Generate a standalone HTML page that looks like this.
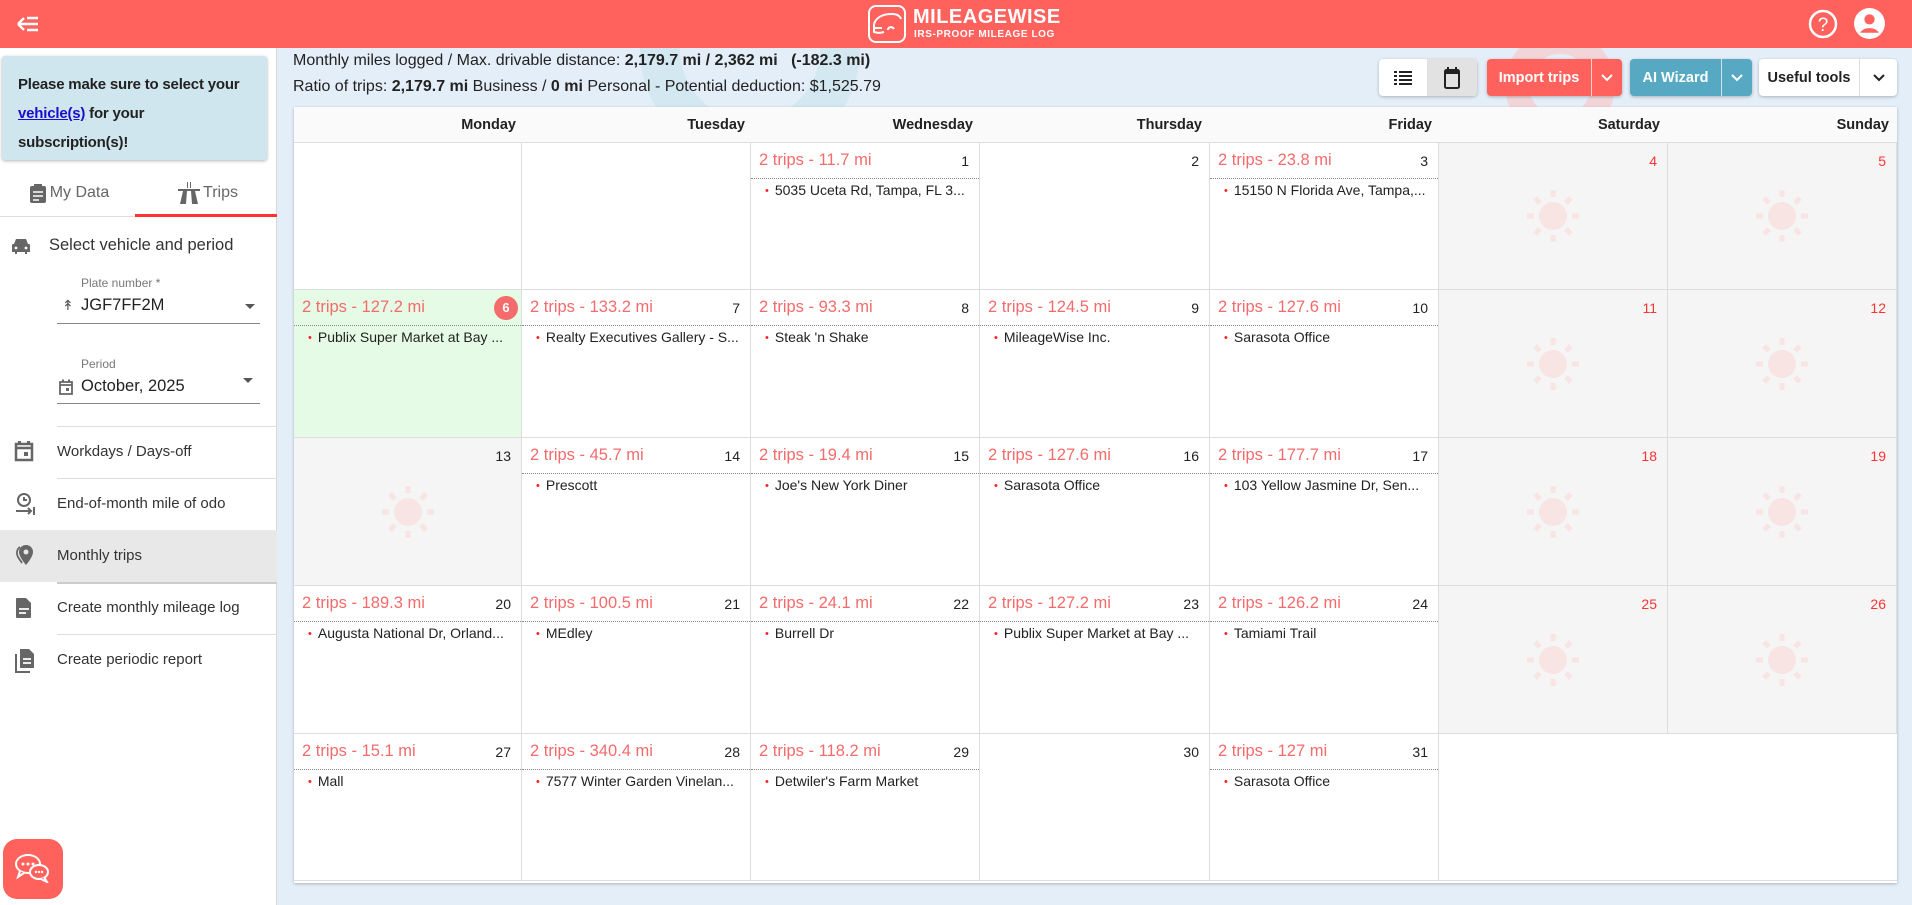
<!DOCTYPE html>
<html><head><meta charset="utf-8"><style>
*{box-sizing:border-box;margin:0;padding:0}
body{width:1912px;height:905px;overflow:hidden;font-family:"Liberation Sans",Arial,sans-serif;background:#e4eef8;position:relative;color:#222}
.hdr{position:absolute;left:0;top:0;width:1912px;height:48px;background:#ff625d;z-index:5}
.side{position:absolute;left:0;top:48px;width:277px;height:857px;background:#fff;border-right:1px solid #d8d8d8;z-index:4}
.note{position:absolute;left:2px;top:8px;width:265px;height:104px;background:#cfe6ee;border-radius:3px;box-shadow:0 1px 3px rgba(0,0,0,.3);padding:14px 12px 14px 16px;font-size:15px;font-weight:bold;line-height:29px;color:#222;letter-spacing:-0.2px}
.note a{color:#1a0dcc;text-decoration:underline}
.tab{position:absolute;top:122px;height:46px;width:138px;font-size:16px;color:#666;display:flex;align-items:center;justify-content:center;gap:3px}
.mi{position:absolute;left:0;width:277px;height:52px;font-size:15px;color:#333}
.mi span{position:absolute;left:57px;top:17px}
.mi svg{position:absolute;left:14px;top:14px}
.sep{position:absolute;left:57px;width:220px;height:1px;background:#ddd}
.stat{position:absolute;left:293px;font-size:16px;color:#222;z-index:2}
.cal{position:absolute;left:294px;top:107px;width:1603px;height:776px;background:#fff;box-shadow:0 1px 3px rgba(0,0,0,.25);z-index:2}
.dh{position:absolute;top:0;height:36px;background:#fafafa;border-bottom:1px solid #ddd;font-size:14.5px;font-weight:bold;line-height:36px;color:#222}
.c{position:absolute;border-right:1px solid #ddd;border-bottom:1px solid #ddd;overflow:hidden}
.c .t{position:absolute;left:8px;top:8px;font-size:16.5px;color:#f46b6b}
.c .n{position:absolute;right:10px;top:10px;font-size:14px;color:#222}
.c .dl{position:absolute;left:0;right:0;top:35px;border-top:1px dotted #888}
.c .it{position:absolute;left:14px;top:39px;font-size:14px;color:#222;white-space:nowrap}
.c .it:before{content:"•";color:#f22;margin-right:6px;font-size:11px;vertical-align:1px}
.we{background:#f5f5f5}
.we .n{color:#f33}
.sun{position:absolute;left:50%;top:50%;margin:-27px 0 0 -27px}
.btn{position:absolute;top:59px;height:37px;border-radius:4px;font-size:14.5px;font-weight:bold;display:flex;align-items:center;box-shadow:0 1px 3px rgba(0,0,0,.25);z-index:2}
</style></head><body>
<div class="hdr">
<svg style="position:absolute;left:16px;top:15px" width="24" height="18" viewBox="0 0 24 18"><path d="M2 9h20M2 9l6-6M2 9l6 6M11 3h11M11 15h11" stroke="#fff" stroke-width="2.4" fill="none"/></svg>
<svg style="position:absolute;left:866px;top:4px" width="44" height="40" viewBox="0 0 44 40"><rect x="3" y="2" width="36" height="36" rx="7" fill="none" stroke="#fff" stroke-width="2"/><path d="M8 20c2-6 8-10 18-10 5 0 8 2 9 5M8 20v8c3 1 7 1 10 0M8 24h8M22 26c0-3 4-4 6-1" stroke="#fff" stroke-width="2" fill="none"/></svg>
<div style="position:absolute;left:913px;top:6px;color:#fff;font-weight:bold;font-size:20px;letter-spacing:.5px">MILEAGEWISE</div>
<div style="position:absolute;left:914px;top:29px;color:#fff;font-weight:bold;font-size:10px;letter-spacing:.6px">IRS-PROOF MILEAGE LOG</div>
<svg style="position:absolute;left:1807px;top:8px" width="32" height="32" viewBox="0 0 32 32"><circle cx="16" cy="16" r="13" fill="none" stroke="#fff" stroke-width="2.5"/><text x="16" y="23" text-anchor="middle" font-size="19" fill="#fff" font-family="Liberation Sans">?</text></svg>
<svg style="position:absolute;left:1853px;top:7px" width="33" height="33" viewBox="0 0 32 32"><circle cx="16" cy="16" r="15" fill="#fff"/><circle cx="16" cy="12" r="5" fill="#ff625d"/><path d="M7 25c3-6 15-6 18 0" fill="#ff625d"/></svg>
</div>

<div class="side">
<div class="note">Please make sure to select your <a>vehicle(s)</a> for your subscription(s)!</div>
<div class="tab" style="left:0"><svg width="18" height="21" viewBox="0 0 18 21"><rect x="1" y="3" width="16" height="17" rx="2" fill="#666"/><rect x="5" y="1" width="8" height="4" fill="#666"/><path d="M4 9h10M4 13h10M4 17h6" stroke="#fff" stroke-width="1.6"/></svg>My Data</div>
<div class="tab" style="left:139px;color:#666"><svg width="22" height="22" viewBox="0 0 22 22"><path d="M0 7h22v2H0zM5 9l-3 13h6l1-13zM17 9l3 13h-6l-1-13zM9 0h1v6H9zM12 0h1v6h-1z" fill="#666"/></svg>Trips</div>
<div style="position:absolute;left:0;top:168px;width:277px;height:1px;background:#ddd"></div>
<div style="position:absolute;left:135px;top:166px;width:142px;height:3px;background:#f33"></div>
<svg style="position:absolute;left:11px;top:190px" width="20" height="16" viewBox="0 0 20 16"><path d="M3 6l2-5h10l2 5h1a1 1 0 011 1v7h-3v2h-2v-2H6v2H4v-2H1V7a1 1 0 011-1z" fill="#666"/><circle cx="5" cy="10" r="1.4" fill="#fff"/><circle cx="15" cy="10" r="1.4" fill="#fff"/></svg>
<div style="position:absolute;left:49px;top:188px;font-size:16.5px;color:#333">Select vehicle and period</div>
<div style="position:absolute;left:81px;top:228px;font-size:12px;color:#777">Plate number *</div>
<div style="position:absolute;left:62px;top:249px;font-size:14px;color:#555">↟</div>
<div style="position:absolute;left:81px;top:248px;font-size:16.5px;color:#222">JGF7FF2M</div>
<div style="position:absolute;left:245px;top:256px;border:5px solid transparent;border-top-color:#555"></div>
<div style="position:absolute;left:57px;top:275px;width:203px;height:1px;background:#888"></div>
<div style="position:absolute;left:81px;top:309px;font-size:12px;color:#777">Period</div>
<svg style="position:absolute;left:59px;top:331px" width="14" height="16" viewBox="0 0 14 16"><path d="M1 3h12v12H1z M1 3v3h12" fill="none" stroke="#666" stroke-width="1.8"/><rect x="3" y="0.5" width="2" height="3" fill="#666"/><rect x="9" y="0.5" width="2" height="3" fill="#666"/><rect x="7" y="9" width="3" height="3" fill="#666"/></svg>
<div style="position:absolute;left:81px;top:329px;font-size:16.5px;color:#222">October, 2025</div>
<div style="position:absolute;left:243px;top:330px;border:5px solid transparent;border-top-color:#555"></div>
<div style="position:absolute;left:57px;top:355px;width:203px;height:1px;background:#888"></div>
<div class="sep" style="top:378px"></div>
<div class="mi" style="top:378px"><svg width="20" height="22" viewBox="0 0 20 22"><path d="M2 4h16v16H2z M2 4v4h16" fill="none" stroke="#666" stroke-width="2.5"/><rect x="4" y="1" width="3" height="4" fill="#666"/><rect x="13" y="1" width="3" height="4" fill="#666"/><rect x="10" y="12" width="4" height="4" fill="#666"/></svg><span>Workdays / Days-off</span></div>
<div class="sep" style="top:430px"></div>
<div class="mi" style="top:430px"><svg width="22" height="24" viewBox="0 0 22 24"><circle cx="10" cy="8" r="6" fill="none" stroke="#666" stroke-width="2"/><path d="M10 5v3h3M2 19h15M14 16l3 3-3 3M20 15v8" stroke="#666" stroke-width="2" fill="none"/></svg><span>End-of-month mile of odo</span></div>
<div class="mi" style="top:482px;background:#e8e8e8"><svg width="22" height="22" viewBox="0 0 22 22"><path d="M12 1a7 7 0 017 7c0 5-7 13-7 13S5 13 5 8a7 7 0 017-7z" fill="#666"/><circle cx="12" cy="8" r="2.5" fill="#e8e8e8"/><path d="M6 3C3 5 2 9 4 13l4 6" stroke="#666" stroke-width="1.8" fill="none"/></svg><span>Monthly trips</span></div>
<div style="position:absolute;left:57px;top:534px;width:220px;height:2px;background:#ccc"></div>
<div class="mi" style="top:534px"><svg width="20" height="24" viewBox="0 0 20 24"><path d="M3 2h9l5 5v14a1 1 0 01-1 1H3a1 1 0 01-1-1V3a1 1 0 011-1z" fill="#666"/><path d="M5 13h10M5 17h7" stroke="#fff" stroke-width="1.8"/></svg><span>Create monthly mileage log</span></div>
<div class="sep" style="top:586px"></div>
<div class="mi" style="top:586px"><svg width="22" height="26" viewBox="0 0 22 26"><path d="M6 1h9l5 5v14H6z" fill="#666"/><path d="M2 6v18h14" stroke="#666" stroke-width="2" fill="none"/><path d="M9 11h8M9 15h8" stroke="#fff" stroke-width="1.8"/></svg><span>Create periodic report</span></div>
<div style="position:absolute;left:3px;top:791px;width:60px;height:60px;border-radius:14px;background:#ff625d"><svg style="position:absolute;left:11px;top:14px" width="38" height="30" viewBox="0 0 38 30"><ellipse cx="14" cy="11" rx="12" ry="9" fill="none" stroke="#fff" stroke-width="2"/><path d="M6 18l-2 6 6-4" fill="#ff625d" stroke="#fff" stroke-width="2"/><ellipse cx="25" cy="19" rx="9" ry="7" fill="#ff625d" stroke="#fff" stroke-width="2"/><path d="M30 24l3 5-6-3" fill="#ff625d" stroke="#fff" stroke-width="2"/><circle cx="9" cy="11" r="1.5" fill="#fff"/><circle cx="14" cy="11" r="1.5" fill="#fff"/><circle cx="19" cy="11" r="1.5" fill="#fff"/><circle cx="22" cy="19" r="1.2" fill="#fff"/><circle cx="25" cy="19" r="1.2" fill="#fff"/><circle cx="28" cy="19" r="1.2" fill="#fff"/></svg></div>
</div>

<div style="position:absolute;left:640px;top:-60px;width:220px;height:220px;border-radius:50%;border:40px solid #d3e8f1;z-index:1"></div>
<div style="position:absolute;left:1505px;top:30px;width:110px;height:110px;border-radius:50%;border:24px solid #f2d5d9;z-index:1"></div>
<div class="stat" style="top:52px">Monthly miles logged / Max. drivable distance: <b>2,179.7 mi / 2,362 mi</b> &nbsp; <b>(-182.3 mi)</b></div>
<div class="stat" style="top:78px">Ratio of trips: <b>2,179.7 mi</b> Business / <b>0 mi</b> Personal - Potential deduction: $1,525.79</div>

<div class="btn" style="left:1379px;width:98px;background:#fff;overflow:hidden">
<div style="width:48px;height:37px;display:flex;align-items:center;justify-content:center"><svg width="18" height="14" viewBox="0 0 18 14"><path d="M0 1h3M5 1h13M0 5h3M5 5h13M0 9h3M5 9h13M0 13h3M5 13h13" stroke="#222" stroke-width="2"/></svg></div>
<div style="width:50px;height:37px;background:#e2e2e2;display:flex;align-items:center;justify-content:center"><svg width="16" height="22" viewBox="0 0 16 22"><rect x="1" y="3" width="14" height="18" rx="1.5" fill="none" stroke="#222" stroke-width="2"/><rect x="1" y="3" width="14" height="4" fill="#222"/><rect x="3" y="0" width="2" height="4" fill="#222"/><rect x="11" y="0" width="2" height="4" fill="#222"/></svg></div></div>
<div class="btn" style="left:1487px;width:135px;background:#ff625d;color:#fff"><span style="width:104px;text-align:center">Import trips</span><span style="width:1px;height:37px;background:#fff;opacity:.7"></span><svg style="margin-left:8px" width="14" height="9" viewBox="0 0 14 9"><path d="M2 2l5 5 5-5" stroke="#fff" stroke-width="2" fill="none"/></svg></div>
<div class="btn" style="left:1630px;width:122px;background:#57a9c3;color:#fff"><span style="width:91px;text-align:center">AI Wizard</span><span style="width:1px;height:37px;background:#fff;opacity:.7"></span><svg style="margin-left:8px" width="14" height="9" viewBox="0 0 14 9"><path d="M2 2l5 5 5-5" stroke="#fff" stroke-width="2" fill="none"/></svg></div>
<div class="btn" style="left:1759px;width:138px;background:#fff;color:#222"><span style="width:100px;text-align:center">Useful tools</span><span style="width:1px;height:37px;background:#ddd"></span><svg style="margin-left:12px" width="14" height="9" viewBox="0 0 14 9"><path d="M2 2l5 5 5-5" stroke="#222" stroke-width="2" fill="none"/></svg></div>

<div class="cal">
<div class="dh" style="left:0;width:1603px"></div>
<div class="dh" style="left:0;width:222px;text-align:right">Monday</div>
<div class="dh" style="left:228px;width:223px;text-align:right">Tuesday</div>
<div class="dh" style="left:457px;width:222px;text-align:right">Wednesday</div>
<div class="dh" style="left:686px;width:222px;text-align:right">Thursday</div>
<div class="dh" style="left:916px;width:222px;text-align:right">Friday</div>
<div class="dh" style="left:1145px;width:221px;text-align:right">Saturday</div>
<div class="dh" style="left:1374px;width:221px;text-align:right">Sunday</div>
<div id="g"></div>
</div>
<script>
var X=[0,228,457,686,916,1145,1374,1603],Y=[36,183,331,479,627,774];
var sun='<svg class="sun" width="54" height="54" viewBox="0 0 54 54"><circle cx="27" cy="27" r="14" fill="#f9e4e4"/><g stroke="#f9e4e4" stroke-width="5"><path d="M27 1v7M27 46v7M1 27h7M46 27h7M9 9l5 5M40 40l5 5M45 9l-5 5M14 40l-5 5"/></g></svg>';
var d=[
[null,null,[1,'2 trips - 11.7 mi','5035 Uceta Rd, Tampa, FL 3...'],[2],[3,'2 trips - 23.8 mi','15150 N Florida Ave, Tampa,...'],[4,'w'],[5,'w']],
[[6,'2 trips - 127.2 mi','Publix Super Market at Bay ...','g'],[7,'2 trips - 133.2 mi','Realty Executives Gallery - S...'],[8,'2 trips - 93.3 mi',"Steak 'n Shake"],[9,'2 trips - 124.5 mi','MileageWise Inc.'],[10,'2 trips - 127.6 mi','Sarasota Office'],[11,'w'],[12,'w']],
[[13,'o'],[14,'2 trips - 45.7 mi','Prescott'],[15,'2 trips - 19.4 mi',"Joe's New York Diner"],[16,'2 trips - 127.6 mi','Sarasota Office'],[17,'2 trips - 177.7 mi','103 Yellow Jasmine Dr, Sen...'],[18,'w'],[19,'w']],
[[20,'2 trips - 189.3 mi','Augusta National Dr, Orland...'],[21,'2 trips - 100.5 mi','MEdley'],[22,'2 trips - 24.1 mi','Burrell Dr'],[23,'2 trips - 127.2 mi','Publix Super Market at Bay ...'],[24,'2 trips - 126.2 mi','Tamiami Trail'],[25,'w'],[26,'w']],
[[27,'2 trips - 15.1 mi','Mall'],[28,'2 trips - 340.4 mi','7577 Winter Garden Vinelan...'],[29,'2 trips - 118.2 mi',"Detwiler's Farm Market"],[30],[31,'2 trips - 127 mi','Sarasota Office'],null,null]];
var h='';
for(var r=0;r<5;r++)for(var c=0;c<7;c++){var e=d[r][c];var st='left:'+X[c]+'px;top:'+Y[r]+'px;width:'+(X[c+1]-X[c])+'px;height:'+(Y[r+1]-Y[r])+'px;';
if(r==4&&c>=5)st+='border-right:none;';
var cls='c',inner='';
if(e){if(e[1]=='w'||e[1]=='o'){cls+=' we';inner=sun+'<div class="n"'+(e[1]=='o'?' style="color:#222"':'')+'>'+e[0]+'</div>';}
else if(e[1]){if(e[3]=='g')st+='background:#e5fbe5;';inner='<div class="t">'+e[1]+'</div>'+(e[3]=='g'?'<div style="position:absolute;right:3px;top:6px;width:24px;height:24px;border-radius:50%;background:#f46b6b;color:#fff;font-weight:bold;font-size:13px;text-align:center;line-height:24px">6</div>':'<div class="n">'+e[0]+'</div>')+'<div class="dl"></div><div class="it">'+e[2]+'</div>';}
else inner='<div class="n">'+e[0]+'</div>';}
h+='<div class="'+cls+'" style="'+st+'">'+inner+'</div>';}
document.getElementById('g').innerHTML=h;
</script>
</body></html>
